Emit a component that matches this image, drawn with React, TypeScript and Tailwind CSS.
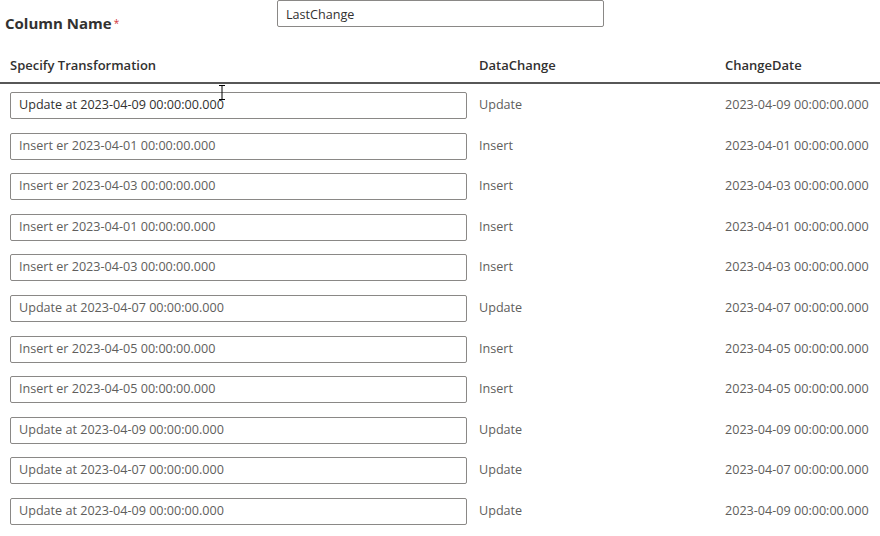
import React from 'react';

interface Row {
  text: string;
  change: string;
  date: string;
}

const rows: Row[] = [
  { text: 'Update at 2023-04-09 00:00:00.000', change: 'Update', date: '2023-04-09 00:00:00.000' },
  { text: 'Insert er 2023-04-01 00:00:00.000', change: 'Insert', date: '2023-04-01 00:00:00.000' },
  { text: 'Insert er 2023-04-03 00:00:00.000', change: 'Insert', date: '2023-04-03 00:00:00.000' },
  { text: 'Insert er 2023-04-01 00:00:00.000', change: 'Insert', date: '2023-04-01 00:00:00.000' },
  { text: 'Insert er 2023-04-03 00:00:00.000', change: 'Insert', date: '2023-04-03 00:00:00.000' },
  { text: 'Update at 2023-04-07 00:00:00.000', change: 'Update', date: '2023-04-07 00:00:00.000' },
  { text: 'Insert er 2023-04-05 00:00:00.000', change: 'Insert', date: '2023-04-05 00:00:00.000' },
  { text: 'Insert er 2023-04-05 00:00:00.000', change: 'Insert', date: '2023-04-05 00:00:00.000' },
  { text: 'Update at 2023-04-09 00:00:00.000', change: 'Update', date: '2023-04-09 00:00:00.000' },
  { text: 'Update at 2023-04-07 00:00:00.000', change: 'Update', date: '2023-04-07 00:00:00.000' },
  { text: 'Update at 2023-04-09 00:00:00.000', change: 'Update', date: '2023-04-09 00:00:00.000' },
];

const App: React.FC = () => {
  return (
    <div
      className="w-[880px] h-[536px] bg-white overflow-hidden text-[12.6px] text-[#323130]"
      style={{ fontFamily: '"Segoe UI", "Open Sans", sans-serif' }}
    >
      <div className="flex items-start h-[40px]">
        <div className="w-[277px] pl-[5px] pt-[13px] text-[15px] font-bold leading-[20px]">
          Column Name
          <span className="text-[#d13438] font-normal text-[10px] ml-[2px] align-top">*</span>
        </div>
        <div className="w-[327px] h-[27px] border border-[#8a8886] rounded-[2px] px-[8px] pt-[3px] flex items-center leading-none">
          LastChange
        </div>
      </div>

      <div className="flex h-[44px] items-center border-b-2 border-[#575757] font-semibold text-[13px] pt-[10px]">
        <div className="w-[479px] pl-[10px]">Specify Transformation</div>
        <div className="w-[246px]">DataChange</div>
        <div>ChangeDate</div>
      </div>

      <div className="flex flex-col pt-[8px] gap-[13.6px]">
        {rows.map((row, i) => (
          <div key={i} className="flex items-center h-[27px]">
            <div className="w-[479px] pl-[10px] relative">
              <div
                className={`w-[457px] h-[27px] border border-[#8a8886] rounded-[2px] px-[8px] flex items-center ${
                  i === 0 ? 'text-[#323130]' : 'text-[#605e5c]'
                }`}
              >
                {row.text}
              </div>
              {i === 0 && (
                <svg
                  className="absolute left-[218px] -top-[7px]"
                  width="8"
                  height="15"
                  viewBox="0 0 8 15"
                >
                  <path d="M1 0.5h6M4 0.5v14M1 14.5h6" stroke="#000" strokeWidth="1" fill="none" />
                </svg>
              )}
            </div>
            <div className="w-[246px] text-[#605e5c]">{row.change}</div>
            <div className="text-[#605e5c]">{row.date}</div>
          </div>
        ))}
      </div>
    </div>
  );
};

export default App;
